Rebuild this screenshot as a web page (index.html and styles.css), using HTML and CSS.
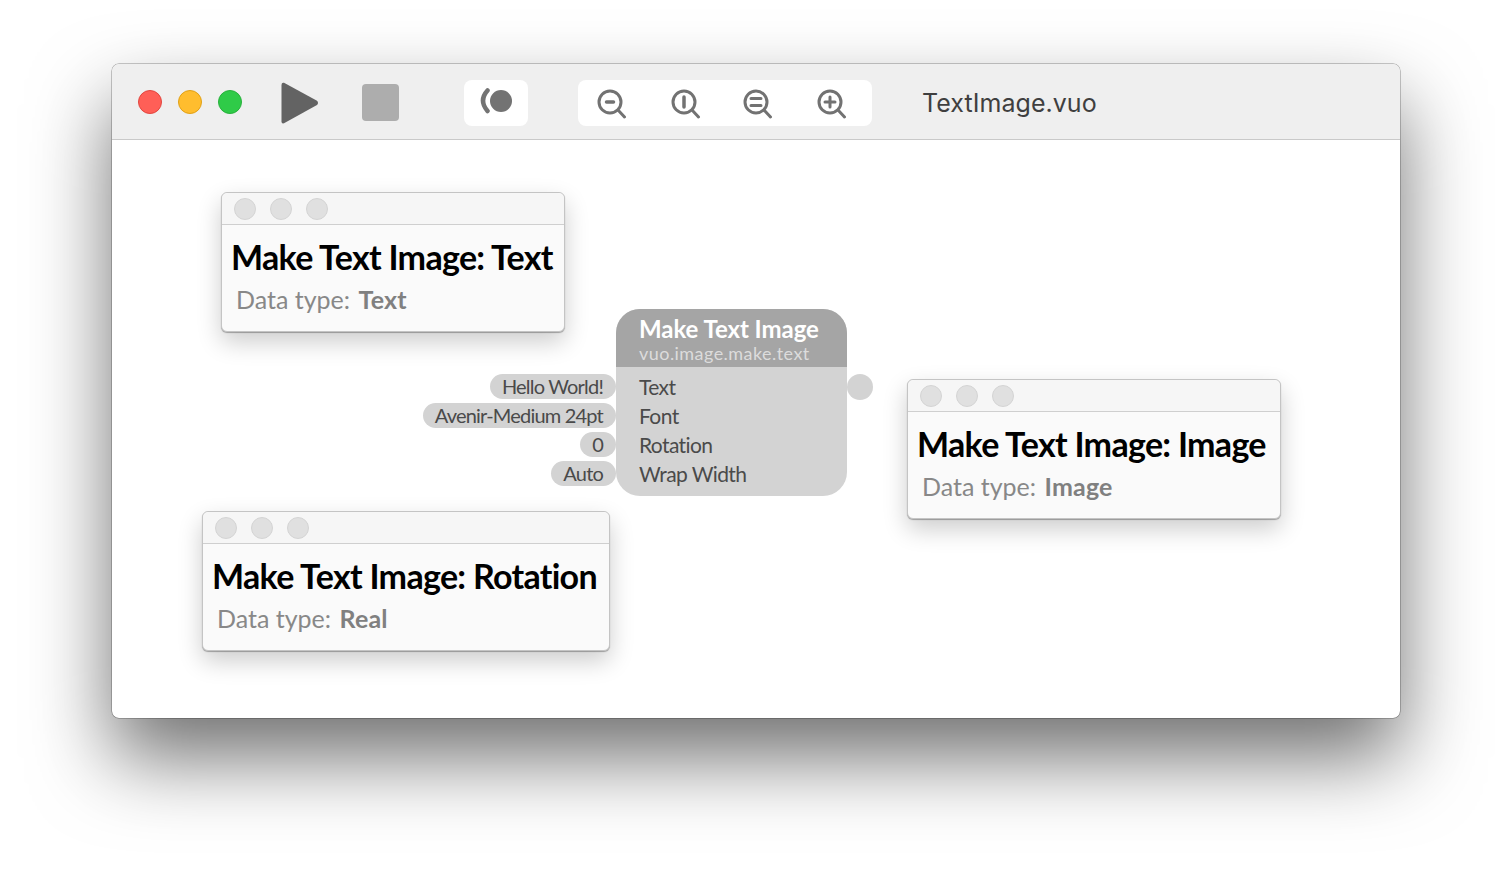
FILE: index.html
```html
<!DOCTYPE html>
<html lang="en">
<head>
<meta charset="utf-8">
<title>TextImage.vuo</title>
<link rel="stylesheet" href="styles.css">
</head>
<body>
<div class="window">
  <header class="toolbar">
    <div class="lights">
      <span class="light red"></span>
      <span class="light yellow"></span>
      <span class="light green"></span>
    </div>
    <svg class="play" width="38" height="42" viewBox="0 0 38 42"><path d="M3 .8 L36 18.800 Q38 21 36 23 L3 41.300 Q.5 42 .5 39.500 V3 Q.5 .2 3 .8Z" fill="#636363"/></svg>
    <span class="stop"></span>
    <div class="group group-one">
      <svg width="34" height="30" viewBox="0 0 34 30"><circle cx="22" cy="13" r="11" fill="#737373"/><path d="M8.500 2.500 Q-.5 12.500 8.500 23" fill="none" stroke="#737373" stroke-width="4.500" stroke-linecap="round"/></svg>
    </div>
    <div class="group group-zoom">
      <svg class="zoom" width="30" height="30" viewBox="0 0 30 30"><circle cx="13" cy="13" r="11" class="lens"/><path d="M21 21 L27.500 28" class="lens"/><path d="M9.500 13 H16.500" class="mark"/></svg>
      <svg class="zoom" width="30" height="30" viewBox="0 0 30 30"><circle cx="13" cy="13" r="11" class="lens"/><path d="M21 21 L27.500 28" class="lens"/><path d="M13 8 V18" class="mark"/></svg>
      <svg class="zoom zoom-tight" width="30" height="30" viewBox="0 0 30 30"><circle cx="13" cy="13" r="11" class="lens"/><path d="M21 21 L27.500 28" class="lens"/><path d="M8 9.500 H18 M8 16.500 H18" class="mark thin"/></svg>
      <svg class="zoom" width="30" height="30" viewBox="0 0 30 30"><circle cx="13" cy="13" r="11" class="lens"/><path d="M21 21 L27.500 28" class="lens"/><path d="M8 13 H18 M13 8 V18" class="mark thin"/></svg>
    </div>
    <div class="doc-title">TextImage.vuo</div>
  </header>
  <main class="canvas">
    <section class="panel panel-text">
      <div class="panel-bar"><span class="dot"></span><span class="dot"></span><span class="dot"></span></div>
      <h2 class="panel-title">Make Text Image: Text</h2>
      <p class="panel-type">Data type: <b>Text</b></p>
    </section>
    <section class="panel panel-image">
      <div class="panel-bar"><span class="dot"></span><span class="dot"></span><span class="dot"></span></div>
      <h2 class="panel-title">Make Text Image: Image</h2>
      <p class="panel-type">Data type: <b>Image</b></p>
    </section>
    <section class="panel panel-rotation">
      <div class="panel-bar"><span class="dot"></span><span class="dot"></span><span class="dot"></span></div>
      <h2 class="panel-title">Make Text Image: Rotation</h2>
      <p class="panel-type">Data type: <b>Real</b></p>
    </section>
    <div class="constants">
      <span class="constant">Hello World!</span>
      <span class="constant">Avenir-Medium 24pt</span>
      <span class="constant">0</span>
      <span class="constant">Auto</span>
    </div>
    <section class="node">
      <div class="node-head">
        <div class="node-name">Make Text Image</div>
        <div class="node-class">vuo.image.make.text</div>
      </div>
      <ul class="ports">
        <li>Text</li>
        <li>Font</li>
        <li>Rotation</li>
        <li>Wrap Width</li>
      </ul>
    </section>
    <span class="output-port"></span>
  </main>
</div>
</body>
</html>
```
FILE: styles.css
```css
* { box-sizing: border-box; }
html, body { margin: 0; padding: 0; height: 100%; background: #fff; overflow: hidden; }
body { padding: 64px 112px 0; font-family: "Lato", "Noto Sans", sans-serif; }
.window {
  width: 1288px; height: 654px; border-radius: 7px; overflow: visible;
  background: #fff; display: flex; flex-direction: column;
  box-shadow: 0 0 0 .5px rgba(0,0,0,.35), 0 0 1px rgba(0,0,0,.4), 0 40px 80px rgba(0,0,0,.56);
}
.toolbar {
  height: 76px; flex: none; display: flex; align-items: center;
  background: #efefef; border-bottom: 1px solid #c9c9c9; border-radius: 7px 7px 0 0;
  padding-left: 26px; padding-top: 3px;
}
.lights { display: flex; gap: 16px; margin-bottom: 2px; }
.light { width: 24px; height: 24px; border-radius: 50%; border: 1px solid; }
.red { background: #ff5f57; border-color: #e2463f; }
.yellow { background: #ffbd2e; border-color: #e1a116; }
.green { background: #2fcb48; border-color: #28b13c; }
.play { margin-left: 39px; }
.stop { width: 37px; height: 37px; margin-left: 43px; margin-bottom: 1px; border-radius: 4px; background: #adadad; }
.group { height: 46px; background: #fff; border-radius: 8px; display: flex; align-items: center; }
.group-one { width: 64px; margin-left: 65px; padding-left: 15px; }
.group-zoom { width: 294px; margin-left: 50px; padding-left: 19px; gap: 44px; }
.zoom { flex: none; margin-top: 1px; }
.zoom-tight { margin-left: -2px; }
.lens { fill: none; stroke: #727272; stroke-width: 3; stroke-linecap: round; }
.mark { fill: none; stroke: #727272; stroke-width: 3.500; stroke-linecap: round; }
.mark.thin { stroke-width: 3; }
.doc-title { margin-left: 50px; font-family: "Inter", sans-serif; font-size: 25px; color: #3f3f3f; letter-spacing: .05px; }
.canvas { position: relative; flex: 1; border-radius: 0 0 7px 7px; }
.panel {
  position: absolute; background: #fafafa; border: 1px solid #c4c4c4; border-radius: 6px;
  box-shadow: 0 1px 1px rgba(0,0,0,.3), 0 10px 24px rgba(0,0,0,.2);
}
.panel-text { left: 109px; top: 52px; width: 344px; height: 140px; }
.panel-image { left: 795px; top: 239px; width: 374px; height: 140px; }
.panel-rotation { left: 90px; top: 371px; width: 408px; height: 140px; }
.panel-bar { height: 32px; display: flex; align-items: center; gap: 14px; padding-left: 12px; background: #f6f6f6; border-bottom: 1px solid #cfcfcf; border-radius: 6px 6px 0 0; }
.dot { width: 22px; height: 22px; border-radius: 50%; background: #e0e0e0; border: 1px solid #d4d4d4; }
.panel-title { margin: 12px 0 0 9px; font-size: 34px; line-height: 40px; font-weight: 700; color: #000; letter-spacing: -.7px; white-space: nowrap; }
.panel-type { margin: 7px 0 0 14px; font-size: 25px; line-height: 30px; color: #888; white-space: nowrap; letter-spacing: 0; }
.panel-type b { margin-left: 2px; font-weight: 700; color: #808080; letter-spacing: .2px; }
.node { position: absolute; left: 504px; top: 169px; width: 231px; height: 187px; background: #d3d3d3; border-radius: 24px; overflow: hidden; }
.node-head { height: 58px; background: #a5a5a5; padding: 5px 0 0 23px; }
.node-name { font-size: 24px; line-height: 29px; font-weight: 700; color: #fff; white-space: nowrap; letter-spacing: -.05px; }
.node-class { font-size: 18px; line-height: 21px; color: #dcdcdc; white-space: nowrap; letter-spacing: .45px; }
.ports { list-style: none; margin: 0; padding: 5px 0 0 23px; }
.ports li { height: 29px; font-size: 21px; line-height: 29px; color: #4a4a4a; white-space: nowrap; letter-spacing: -.6px; }
.constants { position: absolute; right: 784px; top: 234px; display: flex; flex-direction: column; align-items: flex-end; gap: 4px; }
.constant { height: 25px; line-height: 25px; padding: 0 13px 0 12px; background: #d3d3d3; border-radius: 13px; font-size: 20px; color: #4a4a4a; white-space: nowrap; letter-spacing: -.8px; }
.output-port { position: absolute; left: 735px; top: 234px; width: 26px; height: 26px; border-radius: 50%; background: #d3d3d3; }
```
